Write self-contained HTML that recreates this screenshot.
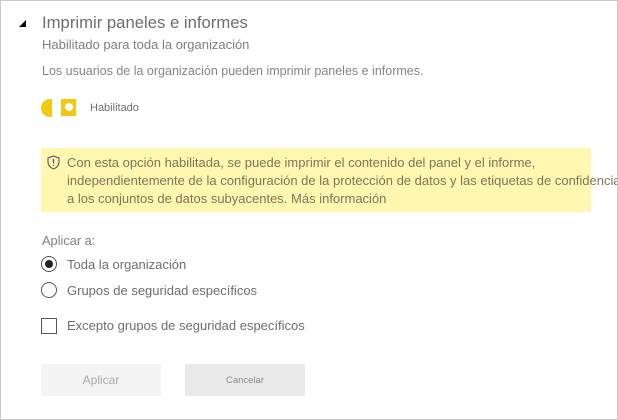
<!DOCTYPE html>
<html><head><meta charset="utf-8"><style>
body{margin:0;width:618px;height:420px;overflow:hidden;background:#fff;font-family:"Liberation Sans",sans-serif;}
.clip{position:absolute;left:0;top:0;width:618px;height:420px;overflow:hidden;}
.frame{position:absolute;left:0;top:0;width:616px;height:418px;border:1px solid #c8c8c8;z-index:2;pointer-events:none;}
.t{position:absolute;white-space:nowrap;color:#7a7a7a;}
</style></head><body>
<div class="clip">
<svg style="position:absolute;left:18px;top:19px" width="9" height="9"><polygon points="8,1 8,8 1,8" fill="#000"/></svg>
<div class="t" style="left:42px;top:13px;font-size:16.7px;color:#6e6e6e">Imprimir paneles e informes</div>
<div class="t" style="left:42px;top:37px;font-size:13px;color:#808080">Habilitado para toda la organización</div>
<div class="t" style="left:42px;top:64px;font-size:12.5px;color:#858585">Los usuarios de la organización pueden imprimir paneles e informes.</div>
<div style="position:absolute;left:41px;top:99px;width:11px;height:18px;background:#f2c811;border-radius:9px 0 0 9px"></div>
<div style="position:absolute;left:61px;top:99px;width:15px;height:17px;background:#f2c811"></div>
<div style="position:absolute;left:65px;top:103px;width:8px;height:8px;background:#fff;border-radius:50%"></div>
<div class="t" style="left:90px;top:102px;font-size:11px;color:#707070">Habilitado</div>
<div style="position:absolute;left:41px;top:148px;width:550px;height:64px;background:#fff7b0"></div>
<svg style="position:absolute;left:47px;top:155px" width="13" height="15" viewBox="0 0 13 15"><path d="M6.5 1 L12 3 V7 C12 10.5 9.5 12.8 6.5 14 C3.5 12.8 1 10.5 1 7 V3 Z" fill="none" stroke="#555" stroke-width="1.1"/><path d="M6.5 4 V8.5 M6.5 10 V11" stroke="#a0287a" stroke-width="1.3"/></svg>
<div class="t" style="left:67px;top:154px;font-size:13px;line-height:18px;color:#7d7558">Con esta opción habilitada, se puede imprimir el contenido del panel y el informe,<br>independientemente de la configuración de la protección de datos y las etiquetas de confidencialidad<br>a los conjuntos de datos subyacentes. Más información</div>
<div class="t" style="left:42px;top:233px;font-size:12.8px;color:#808080">Aplicar a:</div>
<div style="position:absolute;left:41px;top:256px;width:14px;height:14px;border:1px solid #555;border-radius:50%"></div>
<div style="position:absolute;left:45px;top:260px;width:8px;height:8px;background:#222;border-radius:50%"></div>
<div class="t" style="left:67px;top:257px;font-size:13px;color:#6e6e6e">Toda la organización</div>
<div style="position:absolute;left:41px;top:282px;width:14px;height:14px;border:1px solid #555;border-radius:50%"></div>
<div class="t" style="left:67px;top:283px;font-size:13px;color:#6e6e6e">Grupos de seguridad específicos</div>
<div style="position:absolute;left:41px;top:318px;width:14px;height:14px;border:1px solid #555"></div>
<div class="t" style="left:67px;top:318px;font-size:13px;color:#6e6e6e">Excepto grupos de seguridad específicos</div>
<div style="position:absolute;left:41px;top:364px;width:120px;height:32px;background:#f4f4f4;color:#a8a8a8;font-size:12px;text-align:center;line-height:32px">Aplicar</div>
<div style="position:absolute;left:185px;top:364px;width:120px;height:32px;background:#e9e9e9;color:#8a8a8a;font-size:9.5px;text-align:center;line-height:34px">Cancelar</div>
</div>
<div class="frame"></div>
</body></html>
